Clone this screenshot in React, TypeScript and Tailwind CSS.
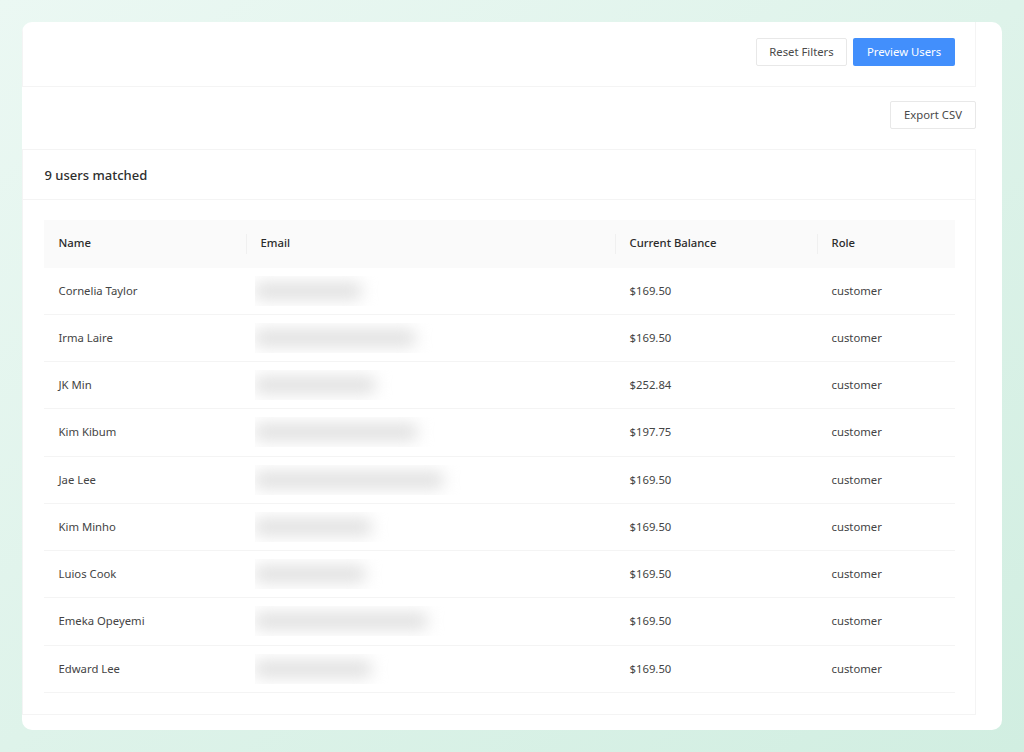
const users = [
  { name: "Cornelia Taylor", balance: "$169.50", blur: 106 },
  { name: "Irma Laire", balance: "$169.50", blur: 160 },
  { name: "JK Min", balance: "$252.84", blur: 120 },
  { name: "Kim Kibum", balance: "$197.75", blur: 162 },
  { name: "Jae Lee", balance: "$169.50", blur: 188 },
  { name: "Kim Minho", balance: "$169.50", blur: 116 },
  { name: "Luios Cook", balance: "$169.50", blur: 110 },
  { name: "Emeka Opeyemi", balance: "$169.50", blur: 172 },
  { name: "Edward Lee", balance: "$169.50", blur: 116 },
];

const columns = ["Name", "Email", "Current Balance", "Role"];

const BlurredEmail = ({ width }: { width: number }) => (
  <div className="h-[30px] w-[230px] overflow-hidden">
    <div className="mt-[7px] h-[16px] rounded-sm bg-[#dedede] blur-[8px]" style={{ width }} />
  </div>
);

export default function App() {
  return (
    <div
      className="h-[752px] w-[1024px] overflow-hidden bg-linear-to-br from-[#ebf8f3] to-[#d1eee1] p-[22px] text-[11.3px] text-[#444444]"
      style={{ fontFamily: '"Noto Sans", "Open Sans", sans-serif' }}
    >
      <div className="h-[708px] w-[980px] overflow-hidden rounded-[10px] bg-white">
        <div className="w-[954px]">
          {/* Filter actions */}
          <div className="flex h-[65px] items-start justify-end gap-[6px] border-b border-l border-r border-[#f4f4f4] pr-[20px] pt-[16px]">
            <button className="h-[28px] w-[91px] rounded-[2px] border border-[#e8e8e8] bg-white pt-px text-[#4a4a4a]">
              Reset Filters
            </button>
            <button className="h-[28px] w-[102px] rounded-[2px] bg-[#428ffc] pt-px text-white">Preview Users</button>
          </div>

          <div className="flex h-[62px] items-start justify-end pt-[14px]">
            <button className="h-[28px] w-[86px] rounded-[2px] border border-[#e8e8e8] bg-white pt-px text-[#4a4a4a]">
              Export CSV
            </button>
          </div>

          {/* Results */}
          <div className="h-[566px] border border-[#f4f4f4]">
            <div className="flex h-[50px] items-center border-b border-[#f4f4f4] pl-[21.5px] pt-[3px] text-[13px] font-medium text-[#2e2e2e]">
              9 users matched
            </div>
            <div className="w-[932px] pl-[21px] pt-[20px]">
              <div className="grid h-[47.5px] grid-cols-[202px_369px_202px_138px] items-center bg-[#fafafa] font-medium text-[#2b2b2b]">
                {columns.map((col, i) => (
                  <div key={col} className="relative pl-[14.5px]">
                    {col}
                    {i > 0 && <span className="absolute left-0 top-[-1px] h-5 w-px bg-[#f0f0f0]" />}
                  </div>
                ))}
              </div>
              {users.map((user) => (
                <div
                  key={user.name}
                  className="grid h-[47.25px] grid-cols-[202px_369px_202px_138px] items-center border-b border-[#f4f4f4]"
                >
                  <div className="pl-[14.5px] pt-px">{user.name}</div>
                  <div className="pl-[9px]">
                    <BlurredEmail width={user.blur} />
                  </div>
                  <div className="pl-[14.5px] pt-px">{user.balance}</div>
                  <div className="pl-[14.5px] pt-px">customer</div>
                </div>
              ))}
            </div>
          </div>
        </div>
      </div>
    </div>
  );
}
